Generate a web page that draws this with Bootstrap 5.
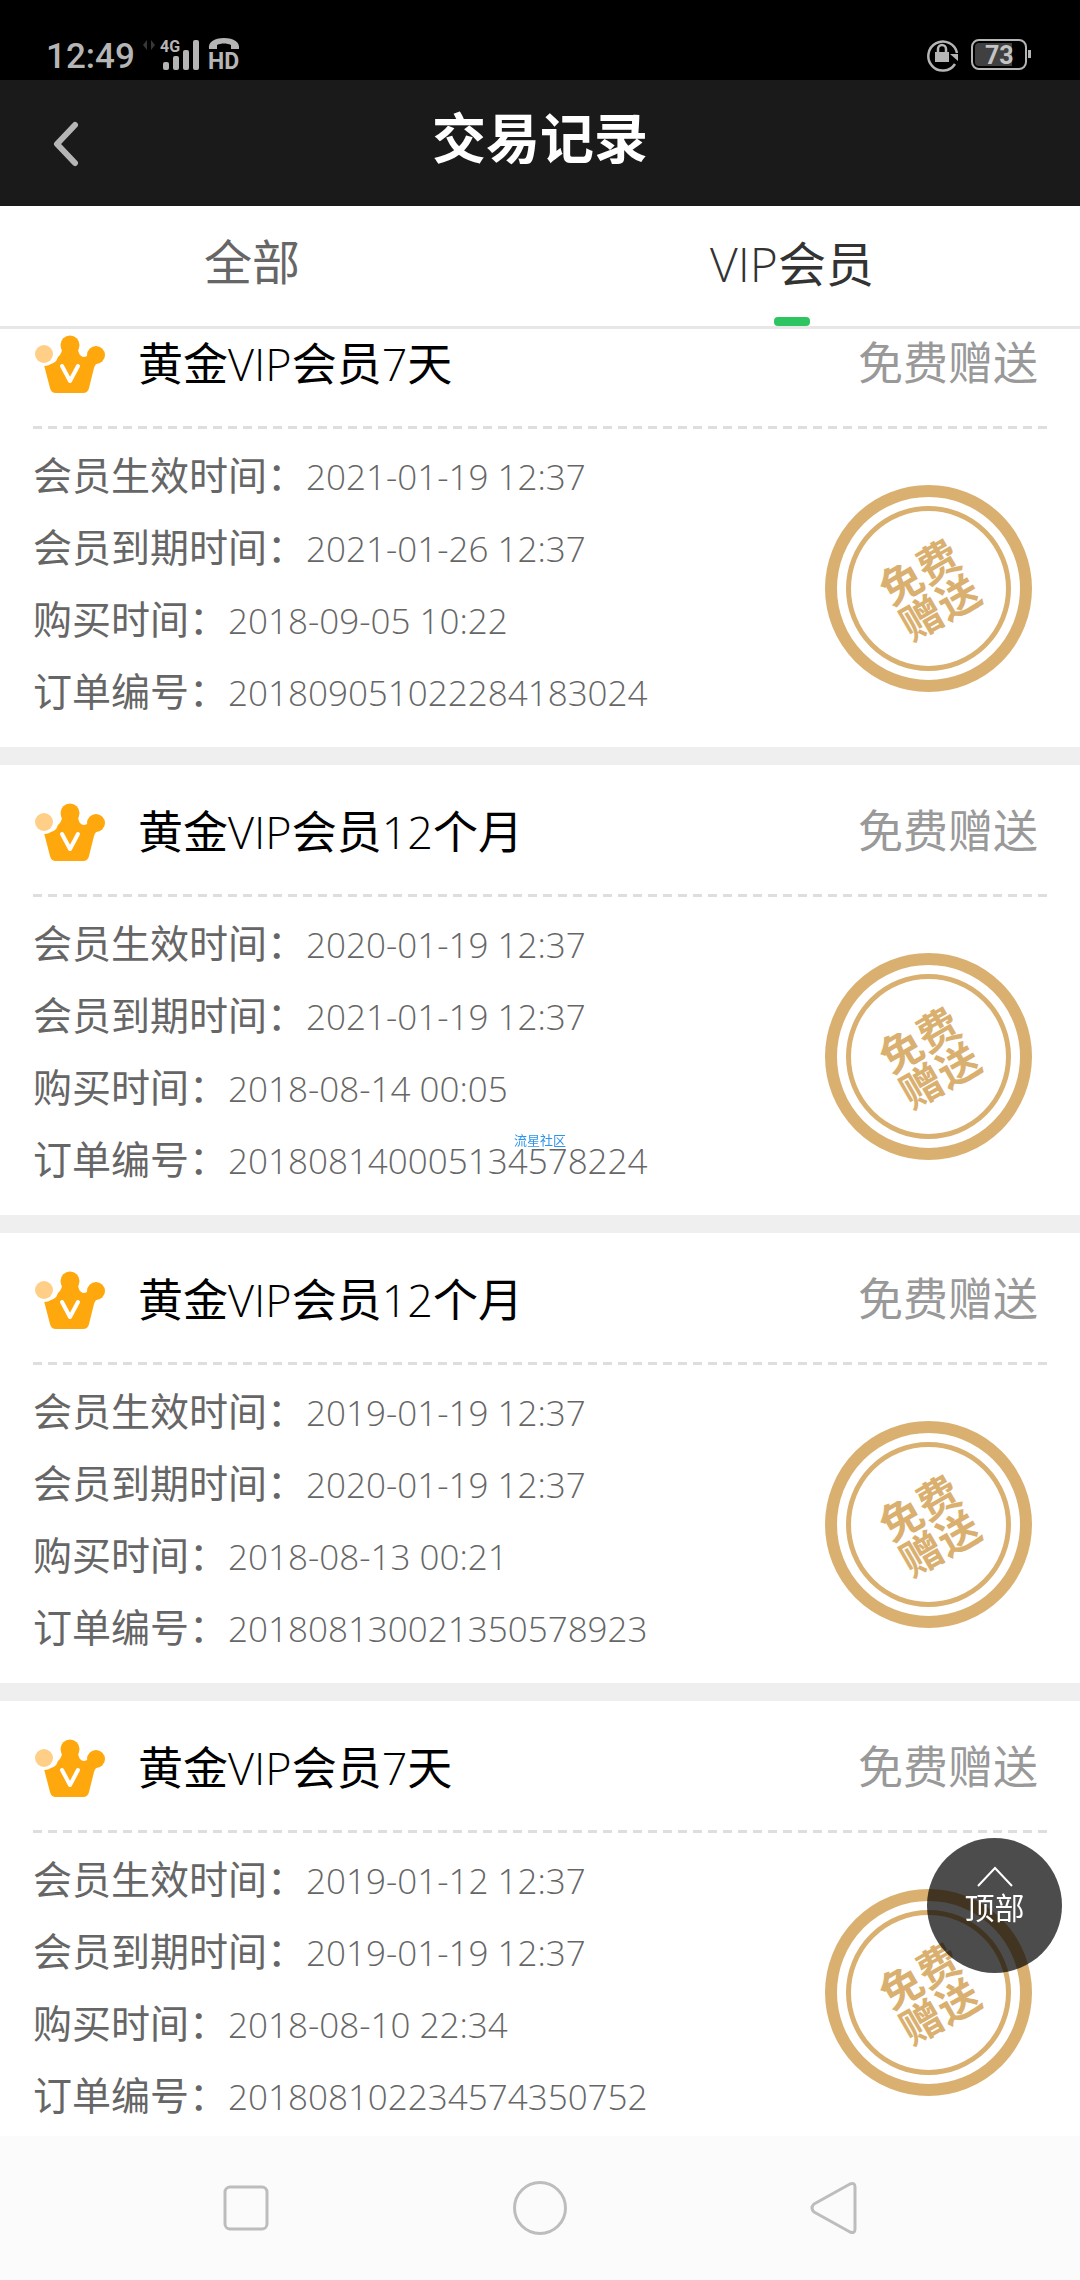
<!DOCTYPE html>
<html lang="zh-CN">
<head>
<meta charset="utf-8">
<meta name="viewport" content="width=device-width, initial-scale=1">
<title>交易记录</title>
<link href="https://cdn.jsdelivr.net/npm/bootstrap@5.3.0/dist/css/bootstrap.min.css" rel="stylesheet">
<style>
  body { font-family: Roboto, "Noto Sans CJK SC", sans-serif; background: #fff; color: #666; }
  .status-bar { height: 80px; padding: 0 48px 7px 46px; background: #000; color: #b5b5b5; }
  .clock { font-size: 35px; line-height: 32px; font-weight: 500; }
  .app-header { height: 126px; padding: 0 48px; background: #1a1a1a; }
  .app-title { font-size: 54px; line-height: 72px; padding-bottom: 4px; font-weight: 700; color: #fff; }
  .side-slot { width: 36px; }
  .tab-strip { height: 123px; border-bottom: 3px solid #e7e7e7; background: #fff; }
  .tab-link { font-size: 48px; line-height: 72px; padding: 22px 36px 0 0; color: #666; }
  .tab-link:hover { color: #333; }
  .tab-link.active { color: #333; }
  .tab-mark { width: 36px; height: 9px; border-radius: 4px; }
  .tab-link.active .tab-mark { background: #2dc561; }
  .thin { font-family: "Open Sans", "Noto Sans CJK SC", sans-serif; font-weight: 300; }
  .record-list { margin-top: -32px; }
  .record { border-bottom: 18px solid #efefef; }
  .record-head { height: 132px; margin: 0 33px; padding: 3px 9px 0 2px; background: repeating-linear-gradient(90deg, #dedede 0 9px, transparent 9px 15px) left bottom / 100% 3px no-repeat; }
  .record-name { font-size: 45px; line-height: 60px; color: #000; margin-left: 31px; }
  .record-kind { font-size: 45px; line-height: 60px; color: #999; }
  .record-body { padding: 12px 48px 18px 33px; }
  .field { font-size: 39px; line-height: 72px; }
  .field dd { font-size: 35px; }
  .stamp { margin-top: 6px; }
  .to-top { width: 135px; height: 135px; right: 18px; bottom: 307px; padding: 0 0 14px; background: rgba(0,0,0,.7); font-size: 30px; line-height: 44px; }
  .site-mark { font-size: 13px; line-height: 15px; color: #2e94ea; }
  .nav-keys { height: 144px; padding: 0 99px; background: #fbfbfb; }
</style>
</head>
<body>
<div class="d-flex flex-column vh-100 overflow-hidden">

  <div class="status-bar d-flex align-items-end justify-content-between flex-shrink-0">
    <div class="d-flex align-items-end gap-2">
      <span class="clock">12:49</span>
      <svg width="108" height="36" viewBox="0 0 108 36" aria-hidden="true" fill="#b5b5b5">
        <path d="M4 3v10L0 8zM8 3v10l4-5z" fill="#383838"/>
        <text x="17" y="15" font-size="16" font-weight="700">4G</text>
        <rect x="20" y="25" width="6" height="8" rx="2"/>
        <rect x="30" y="19" width="6" height="14" rx="2"/>
        <rect x="40" y="13" width="6" height="20" rx="2"/>
        <rect x="50" y="3" width="6" height="30" rx="2"/>
        <path d="M66 12c-1-7 5-11 15-11s16 4 15 11h-8V8c-4-2-10-2-14 0v4z"/>
        <text x="65" y="32" font-size="23" font-weight="700">HD</text>
      </svg>
    </div>
    <svg width="106" height="36" viewBox="0 0 106 36" aria-hidden="true" fill="none" stroke="#b5b5b5">
      <path d="M29 27A14.500 14.500 0 1 1 31 16" stroke-width="2.500"/>
      <path d="M24 17h8v7z" fill="#b5b5b5" stroke="none"/>
      <rect x="9" y="15" width="14" height="10" fill="#b5b5b5" stroke="none"/>
      <path d="M12 16v-4a4 4 0 0 1 8 0v4" stroke-width="2.500"/>
      <rect x="46" y="3" width="54" height="29" rx="7" stroke-width="2"/>
      <path d="M49 10q0-4 4-4h33v23H53q-4 0-4-4z" fill="#404040" stroke="none"/>
      <rect x="102" y="13" width="3" height="8" fill="#b5b5b5" stroke="none"/>
      <text x="59" y="27" font-size="25" font-weight="700" fill="#c4c4c4" stroke="none">73</text>
    </svg>
  </div>

  <header class="app-header d-flex align-items-center justify-content-between flex-shrink-0">
    <button type="button" class="btn p-0 border-0 side-slot d-flex" aria-label="返回">
      <svg width="36" height="48" viewBox="0 0 36 48" fill="none" stroke="#b5b5b5" stroke-width="6" stroke-linecap="round" stroke-linejoin="round"><path d="M27 6 9 25l18 19"/></svg>
    </button>
    <h1 class="app-title m-0">交易记录</h1>
    <span class="side-slot"></span>
  </header>

  <nav class="tab-strip d-flex flex-shrink-0">
    <a href="#all" class="tab-link w-50 d-flex flex-column align-items-center justify-content-between text-decoration-none"><span>全部</span><span class="tab-mark"></span></a>
    <a href="#vip" class="tab-link active w-50 d-flex flex-column align-items-center justify-content-between text-decoration-none" aria-current="page"><span><span class="thin">VIP</span>会员</span><span class="tab-mark"></span></a>
  </nav>

  <main class="flex-fill overflow-hidden">
    <svg class="d-none">
      <symbol id="crown" viewBox="0 0 72 60">
        <g fill="#ffa80d">
          <circle cx="35" cy="10" r="9.500"/><circle cx="61" cy="20" r="9"/>
          <path d="M9 30q12 0 14-8 4-3 4-9h16q0 7 5 9 5 0 8-5l8 10q-4 2-5 6l-5 20q-1 5-6 5H21q-5 0-6-5z"/>
        </g>
        <circle cx="9" cy="19" r="12" fill="#fff"/><circle cx="9" cy="19" r="9" fill="#ffcf87"/>
        <path d="m27 31 8 15 8-15" fill="none" stroke="#fff" stroke-width="4" stroke-linecap="round" stroke-linejoin="round"/>
      </symbol>
      <symbol id="stamp" viewBox="0 0 207 207">
        <g fill="none" stroke="#dab070"><circle cx="103.500" cy="103.500" r="97.500" stroke-width="12"/><circle cx="103.500" cy="103.500" r="80" stroke-width="5"/></g>
        <g transform="rotate(-30 105 105)" fill="#dab070" font-size="42" font-weight="700" text-anchor="middle">
          <text x="105" y="100">免费</text><text x="105" y="141">赠送</text>
        </g>
      </symbol>
    </svg>
    <div class="record-list">

      <article class="record">
        <div class="record-head d-flex align-items-center">
          <svg width="72" height="60" aria-hidden="true"><use href="#crown"/></svg>
          <h2 class="record-name mb-0 fw-normal flex-fill">黄金<span class="thin">VIP</span>会员<span class="thin">7</span>天</h2>
          <span class="record-kind">免费赠送</span>
        </div>
        <div class="record-body d-flex align-items-center justify-content-between">
          <dl class="mb-0">
            <div class="field d-flex"><dt class="fw-normal">会员生效时间：</dt><dd class="mb-0 thin">2021-01-19 12:37</dd></div>
            <div class="field d-flex"><dt class="fw-normal">会员到期时间：</dt><dd class="mb-0 thin">2021-01-26 12:37</dd></div>
            <div class="field d-flex"><dt class="fw-normal">购买时间：</dt><dd class="mb-0 thin">2018-09-05 10:22</dd></div>
            <div class="field d-flex"><dt class="fw-normal">订单编号：</dt><dd class="mb-0 thin">201809051022284183024</dd></div>
          </dl>
          <svg class="stamp" width="207" height="207" role="img" aria-label="免费赠送"><use href="#stamp"/></svg>
        </div>
      </article>

      <article class="record">
        <div class="record-head d-flex align-items-center">
          <svg width="72" height="60" aria-hidden="true"><use href="#crown"/></svg>
          <h2 class="record-name mb-0 fw-normal flex-fill">黄金<span class="thin">VIP</span>会员<span class="thin">12</span>个月</h2>
          <span class="record-kind">免费赠送</span>
        </div>
        <div class="record-body d-flex align-items-center justify-content-between">
          <dl class="mb-0">
            <div class="field d-flex"><dt class="fw-normal">会员生效时间：</dt><dd class="mb-0 thin">2020-01-19 12:37</dd></div>
            <div class="field d-flex"><dt class="fw-normal">会员到期时间：</dt><dd class="mb-0 thin">2021-01-19 12:37</dd></div>
            <div class="field d-flex"><dt class="fw-normal">购买时间：</dt><dd class="mb-0 thin">2018-08-14 00:05</dd></div>
            <div class="field d-flex"><dt class="fw-normal">订单编号：</dt><dd class="mb-0 thin">201808140005134578224</dd></div>
          </dl>
          <svg class="stamp" width="207" height="207" role="img" aria-label="免费赠送"><use href="#stamp"/></svg>
        </div>
      </article>

      <article class="record">
        <div class="record-head d-flex align-items-center">
          <svg width="72" height="60" aria-hidden="true"><use href="#crown"/></svg>
          <h2 class="record-name mb-0 fw-normal flex-fill">黄金<span class="thin">VIP</span>会员<span class="thin">12</span>个月</h2>
          <span class="record-kind">免费赠送</span>
        </div>
        <div class="record-body d-flex align-items-center justify-content-between">
          <dl class="mb-0">
            <div class="field d-flex"><dt class="fw-normal">会员生效时间：</dt><dd class="mb-0 thin">2019-01-19 12:37</dd></div>
            <div class="field d-flex"><dt class="fw-normal">会员到期时间：</dt><dd class="mb-0 thin">2020-01-19 12:37</dd></div>
            <div class="field d-flex"><dt class="fw-normal">购买时间：</dt><dd class="mb-0 thin">2018-08-13 00:21</dd></div>
            <div class="field d-flex"><dt class="fw-normal">订单编号：</dt><dd class="mb-0 thin">201808130021350578923</dd></div>
          </dl>
          <svg class="stamp" width="207" height="207" role="img" aria-label="免费赠送"><use href="#stamp"/></svg>
        </div>
      </article>

      <article class="record">
        <div class="record-head d-flex align-items-center">
          <svg width="72" height="60" aria-hidden="true"><use href="#crown"/></svg>
          <h2 class="record-name mb-0 fw-normal flex-fill">黄金<span class="thin">VIP</span>会员<span class="thin">7</span>天</h2>
          <span class="record-kind">免费赠送</span>
        </div>
        <div class="record-body d-flex align-items-center justify-content-between">
          <dl class="mb-0">
            <div class="field d-flex"><dt class="fw-normal">会员生效时间：</dt><dd class="mb-0 thin">2019-01-12 12:37</dd></div>
            <div class="field d-flex"><dt class="fw-normal">会员到期时间：</dt><dd class="mb-0 thin">2019-01-19 12:37</dd></div>
            <div class="field d-flex"><dt class="fw-normal">购买时间：</dt><dd class="mb-0 thin">2018-08-10 22:34</dd></div>
            <div class="field d-flex"><dt class="fw-normal">订单编号：</dt><dd class="mb-0 thin">201808102234574350752</dd></div>
          </dl>
          <svg class="stamp" width="207" height="207" role="img" aria-label="免费赠送"><use href="#stamp"/></svg>
        </div>
      </article>

    </div>
  </main>

  <div class="nav-keys d-flex align-items-center flex-shrink-0">
    <button type="button" class="btn border-0 p-0 flex-fill" aria-label="最近任务"><svg width="56" height="56" viewBox="0 0 56 56" fill="none" stroke="#bdbdbd" stroke-width="3"><rect x="7" y="7" width="42" height="42" rx="5"/></svg></button>
    <button type="button" class="btn border-0 p-0 flex-fill" aria-label="主页"><svg width="56" height="56" viewBox="0 0 56 56" fill="none" stroke="#bdbdbd" stroke-width="3"><circle cx="28" cy="28" r="25.500"/></svg></button>
    <button type="button" class="btn border-0 p-0 flex-fill" aria-label="返回键"><svg width="56" height="56" viewBox="0 0 56 56" fill="none" stroke="#bdbdbd" stroke-width="3" stroke-linejoin="round"><path d="M8 24 44 4q5-2 5 3v42q0 5-5 3L8 32q-4-4 0-8z"/></svg></button>
  </div>
</div>

<button type="button" class="to-top btn border-0 rounded-circle position-fixed text-white d-flex flex-column align-items-center justify-content-center">
  <svg width="36" height="21" viewBox="0 0 36 21" fill="none" stroke="#fff" stroke-width="2" aria-hidden="true"><path d="M1 20 18 2l17 18"/></svg>
  顶部
</button>
<span class="site-mark position-fixed top-50 start-50 translate-middle text-nowrap">流星社区</span>

<script src="https://cdn.jsdelivr.net/npm/bootstrap@5.3.0/dist/js/bootstrap.bundle.min.js"></script>
</body>
</html>
